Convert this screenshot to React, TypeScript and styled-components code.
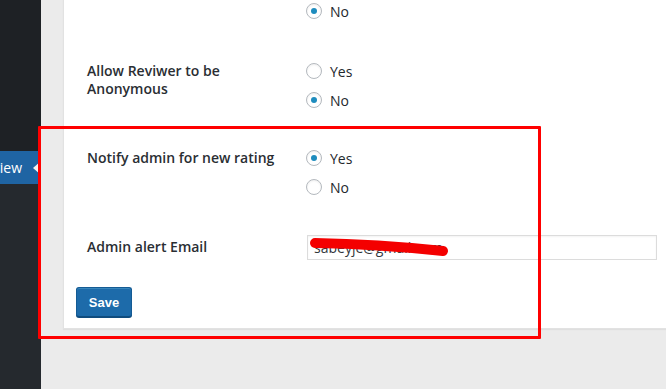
import React from 'react';
import styled, { createGlobalStyle } from 'styled-components';

const GlobalStyle = createGlobalStyle`
    html, body {
        margin  : 0;
        padding : 0;
        width   : 666px;
        height  : 389px;
        overflow: hidden;
        background: #ebebeb;
    }
    * {
        box-sizing: border-box;
    }
`;

type Field = {
    label: string;
    options: string[];
    checked: number;
};

const fields: Field[] = [
    { label: 'Allow Review', options: ['Yes', 'No'], checked: 1 },
    { label: 'Allow Reviwer to be Anonymous', options: ['Yes', 'No'], checked: 1 },
    { label: 'Notify admin for new rating', options: ['Yes', 'No'], checked: 0 },
];

const App = () => {
    return (
        <Page>
            <GlobalStyle />
            <Sidebar>
                <MenuTop />
                <MenuItem>
                    <span>Review</span>
                </MenuItem>
                <MenuBottom />
            </Sidebar>
            <Main>
                <Card>
                    <FormTable>
                        {fields.map((f) => (
                            <Row key={f.label}>
                                <Label>{f.label}</Label>
                                <Options>
                                    {f.options.map((o, i) => (
                                        <Option key={o}>
                                            <Radio checked={i === f.checked} />
                                            <span>{o}</span>
                                        </Option>
                                    ))}
                                </Options>
                            </Row>
                        ))}
                        <EmailRow>
                            <Label $center>Admin alert Email</Label>
                            <EmailField>
                                <TextInput defaultValue='sabeyje@gmail.com' />
                                <Scribble width='150' height='24' viewBox='0 0 150 24'>
                                    <path d='M8 8 Q70 9 136 16' />
                                </Scribble>
                            </EmailField>
                        </EmailRow>
                    </FormTable>
                    <SaveButton>Save</SaveButton>
                </Card>
            </Main>
            <Highlight />
        </Page>
    );
};

export default App;

const Page = styled.div`
    position   : relative;
    display    : flex;
    width      : 666px;
    height     : 389px;
    overflow   : hidden;
    font-family: 'Open Sans', 'Liberation Sans', sans-serif;
    font-size  : 14px;
    color      : #23282d;
`;

const Sidebar = styled.div`
    width         : 41px;
    flex-shrink   : 0;
    display       : flex;
    flex-direction: column;
`;

const MenuTop = styled.div`
    height    : 151px;
    background: #1e2125;
`;

const MenuItem = styled.div`
    position       : relative;
    height         : 33px;
    background     : #1f64a3;
    display        : flex;
    align-items    : center;
    justify-content: flex-end;
    padding-right  : 19px;
    overflow       : hidden;
    white-space    : nowrap;
    span {
        color    : #fff;
        font-size: 14px;
    }
    &::after {
        content     : '';
        position    : absolute;
        right       : 0;
        top         : 50%;
        margin-top  : -7px;
        border      : 7px solid transparent;
        border-right: 8px solid #f1f1f1;
        border-left : 0;
    }
`;

const MenuBottom = styled.div`
    flex      : 1;
    background: #25292e;
`;

const Main = styled.div`
    flex        : 1;
    background  : #ebebeb;
    padding-left: 22px;
`;

const Card = styled.div`
    margin-top    : -48px;
    background    : #fff;
    border        : 1px solid #e2e2e2;
    border-right  : 0;
    box-shadow    : 0 1px 1px rgba(0, 0, 0, 0.05);
    padding       : 0 0 11px 12px;
`;

const FormTable = styled.div`
    padding-left: 11px;
`;

const Row = styled.div`
    display              : grid;
    grid-template-columns: 219px 1fr;
    padding              : 14.5px 0;
    &:first-child {
        padding-bottom: 16.5px;
    }
`;

const EmailRow = styled(Row)`
    align-items   : center;
    padding-top   : 18.5px;
    padding-bottom: 14.5px;
`;

const Label = styled.div<{ $center?: boolean }>`
    width       : 200px;
    padding-top : ${(p) => (p.$center ? '0' : '5.5px')};
    padding-right: 10px;
    line-height : 18px;
    font-weight : 600;
    color       : #2a2e33;
`;

const Options = styled.div`
    display       : flex;
    flex-direction: column;
`;

const Option = styled.label`
    display    : flex;
    align-items: center;
    height     : 29px;
    gap        : 8px;
    color      : #23282d;
`;

const Radio = styled.span<{ checked: boolean }>`
    width        : 16px;
    height       : 16px;
    border-radius: 50%;
    border       : 1px solid #b4b9be;
    background   : #fff;
    box-shadow   : inset 0 1px 2px rgba(0, 0, 0, 0.07);
    display      : flex;
    align-items  : center;
    justify-content: center;
    &::before {
        content      : '';
        width        : 6px;
        height       : 6px;
        border-radius: 50%;
        background   : #1e8cbe;
        display      : ${(p) => (p.checked ? 'block' : 'none')};
    }
`;

const EmailField = styled.div`
    position   : relative;
    padding-left: 1px;
`;

const TextInput = styled.input`
    display    : block;
    width      : 350px;
    height     : 25px;
    border     : 1px solid #dcdcdc;
    box-shadow : inset 0 1px 2px rgba(0, 0, 0, 0.05);
    padding    : 0 6px;
    font-family: 'Open Sans', 'Liberation Sans', sans-serif;
    font-size  : 14px;
    color      : #32373c;
    outline    : none;
`;

const Scribble = styled.svg`
    position: absolute;
    left    : 1px;
    top     : 0;
    path {
        fill          : none;
        stroke        : #f40000;
        stroke-width  : 10;
        stroke-linecap: round;
    }
`;

const SaveButton = styled.button`
    margin-top   : 13px;
    width        : 56px;
    height       : 30px;
    background   : #1d6baa;
    border       : 1px solid #145b94;
    border-bottom-color: #0f4c7e;
    border-radius: 3px;
    box-shadow   : inset 0 1px 0 rgba(120, 200, 230, 0.3), 0 1px 0 #0f4c7e;
    color        : #fff;
    font-family  : 'Liberation Sans', Arial, sans-serif;
    font-weight  : 700;
    font-size    : 13px;
    padding      : 0;
`;

const Highlight = styled.div`
    position     : absolute;
    left         : 38px;
    top          : 126px;
    width        : 503px;
    height       : 213px;
    border       : 3px solid #ff0000;
    border-radius: 1px;
    pointer-events: none;
`;
